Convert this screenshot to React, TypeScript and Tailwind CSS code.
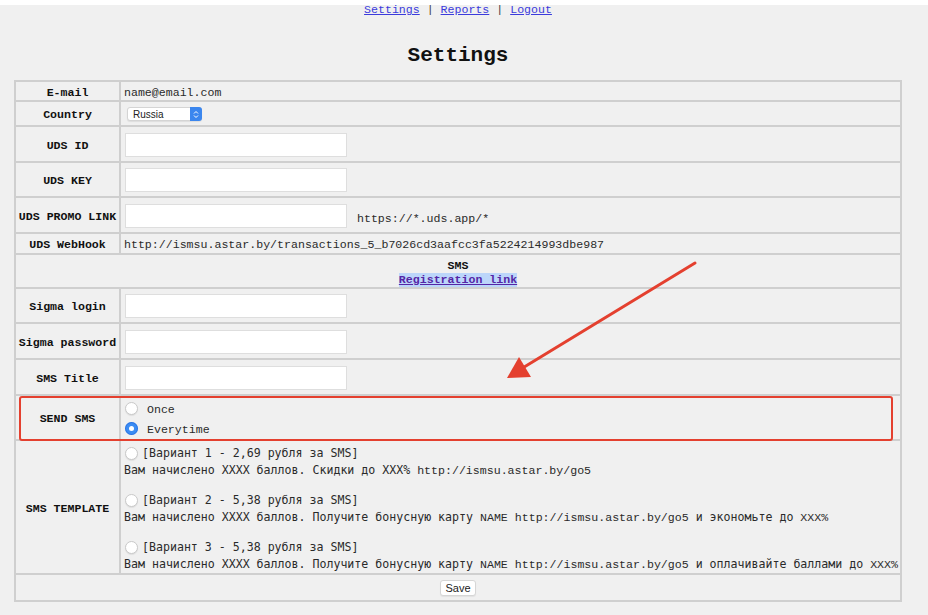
import React from "react";

const mono = "font-['Liberation_Mono','DejaVu_Sans_Mono',monospace]";
const sansMono = "font-['DejaVu_Sans_Mono','Liberation_Mono',monospace]";

const Radio = ({ checked }: { checked?: boolean }) =>
  checked ? (
    <span className="inline-flex w-[13px] h-[13px] rounded-full bg-[#3b8cf3] items-center justify-center shrink-0 shadow-[inset_0_0_0_1px_rgba(30,100,220,0.6)]">
      <span className="w-[5px] h-[5px] rounded-full bg-white" />
    </span>
  ) : (
    <span className="inline-block w-[13px] h-[13px] rounded-full bg-white border border-[#c9c9c9] shrink-0 shadow-[0_1px_1px_rgba(0,0,0,0.08)]" />
  );

const Input = () => (
  <div className="w-[222px] h-[24px] bg-white border border-[#dedede] shrink-0" />
);

const Label = ({ children, h }: { children: React.ReactNode; h: string }) => (
  <div className={`${h} bg-[#f0f0f0] flex items-center justify-center pt-[3px] font-bold text-[#111] whitespace-nowrap`}>
    {children}
  </div>
);

const S = ({ children }: { children: React.ReactNode }) => (
  <span className={sansMono}>{children}</span>
);

export default function App() {
  return (
    <div className={`relative w-[928px] h-[615px] bg-[#f0f0f0] overflow-hidden ${mono} text-[11.6px] text-[#2a2a2a]`}>
      <div className="h-[5px] bg-white" />
      <div className="w-[916px] h-[10px] leading-[10px] text-center whitespace-pre">
        <a className="text-[#3b3bdc] underline">Settings</a>
        <span className="text-[#444]"> | </span>
        <a className="text-[#3b3bdc] underline">Reports</a>
        <span className="text-[#444]"> | </span>
        <a className="text-[#3b3bdc] underline">Logout</a>
      </div>
      <div className="w-[916px] mt-[29px] mb-[12px] h-[24px] leading-[24px] text-center text-[21px] font-bold text-[#111]">
        Settings
      </div>

      <div className="w-[916px]">
        <div className="mx-auto w-[888px] grid grid-cols-[103px_779px] gap-[2px] p-[2px] bg-[#cfcfcf]">
          <Label h="h-[18px]">E-mail</Label>
          <div className="h-[18px] bg-[#f0f0f0] flex items-center pl-[3px] pt-[3px]">name@email.com</div>

          <Label h="h-[23px]">Country</Label>
          <div className="h-[23px] bg-[#f0f0f0] flex items-center pl-[6px] pt-[1px]">
            <div className="w-[75px] h-[14px] bg-white rounded-[3px] border border-[#d4d4d4] flex items-center justify-between font-['Liberation_Sans',sans-serif] text-[10px] text-[#222] shadow-[0_1px_1px_rgba(0,0,0,0.08)]">
              <span className="pl-[5px]">Russia</span>
              <span className="w-[12px] h-[14px] -mr-px rounded-r-[3px] bg-[#3b86ee] flex flex-col items-center justify-center">
                <svg width="6" height="9" viewBox="0 0 6 9">
                  <path d="M1 3.5 L3 1.5 L5 3.5 M1 5.5 L3 7.5 L5 5.5" stroke="white" strokeWidth="1" fill="none" />
                </svg>
              </span>
            </div>
          </div>

          <Label h="h-[34px]">UDS ID</Label>
          <div className="h-[34px] bg-[#f0f0f0] flex items-center pl-[4px] pt-[1px]"><Input /></div>

          <Label h="h-[33px]">UDS KEY</Label>
          <div className="h-[33px] bg-[#f0f0f0] flex items-center pl-[4px] pt-[1px]"><Input /></div>

          <Label h="h-[34px]">UDS PROMO LINK</Label>
          <div className="h-[34px] bg-[#f0f0f0] flex items-center pl-[4px] pt-[1px]">
            <Input />
            <span className="ml-[10px] mt-[6px]">https://*.uds.app/*</span>
          </div>

          <Label h="h-[19px]">UDS WebHook</Label>
          <div className="h-[19px] bg-[#f0f0f0] flex items-center pl-[3px] pt-[3px]">
            http://ismsu.astar.by/transactions_5_b7026cd3aafcc3fa5224214993dbe987
          </div>

          <div className="col-span-2 h-[32px] bg-[#f0f0f0] flex flex-col items-center justify-center pt-[3px] leading-[14px]">
            <span className="font-bold text-[#111]">SMS</span>
            <a className="font-bold text-[#5526a6] underline bg-[#bcd6fa]">Registration link</a>
          </div>

          <Label h="h-[33px]">Sigma login</Label>
          <div className="h-[33px] bg-[#f0f0f0] flex items-center pl-[4px] pt-[1px]"><Input /></div>

          <Label h="h-[34px]">Sigma password</Label>
          <div className="h-[34px] bg-[#f0f0f0] flex items-center pl-[4px] pt-[1px]"><Input /></div>

          <Label h="h-[34px]">SMS Title</Label>
          <div className="h-[34px] bg-[#f0f0f0] flex items-center pl-[4px] pt-[1px]"><Input /></div>

          <Label h="h-[43px]">SEND SMS</Label>
          <div className="h-[43px] bg-[#f0f0f0] flex flex-col justify-center pl-[4px] pt-[2px] leading-[18px]">
            <div className="flex items-center gap-[9px]"><Radio /><span className="pt-[2px]">Once</span></div>
            <div className="flex items-center gap-[9px]"><Radio checked /><span className="pt-[2px]">Everytime</span></div>
          </div>

          <Label h="h-[132px]">SMS TEMPLATE</Label>
          <div className="h-[132px] bg-[#f0f0f0] pl-[3px] pt-[4px] leading-[17px] whitespace-nowrap">
            <div className="mb-[13px]">
              <div className="flex items-center gap-[4px] pl-[1px]"><Radio /><S>[Вариант 1 - 2,69 рубля за SMS]</S></div>
              <div><S>Вам начислено XXXX баллов. Скидки до XXX%</S> http://ismsu.astar.by/go5</div>
            </div>
            <div className="mb-[13px]">
              <div className="flex items-center gap-[4px] pl-[1px]"><Radio /><S>[Вариант 2 - 5,38 рубля за SMS]</S></div>
              <div><S>Вам начислено XXXX баллов. Получите бонусную карту</S> NAME http://ismsu.astar.by/go5 <S>и экономьте до</S> XXX%</div>
            </div>
            <div>
              <div className="flex items-center gap-[4px] pl-[1px]"><Radio /><S>[Вариант 3 - 5,38 рубля за SMS]</S></div>
              <div><S>Вам начислено XXXX баллов. Получите бонусную карту</S> NAME http://ismsu.astar.by/go5 <S>и оплачивайте баллами до</S> XXX%</div>
            </div>
          </div>

          <div className="col-span-2 h-[25px] bg-[#f0f0f0] flex items-center justify-center pt-[1px]">
            <button className="w-[36px] h-[16px] bg-white border border-[#d6d6d6] rounded-[3px] font-['Liberation_Sans',sans-serif] text-[11px] leading-[14px] text-[#222] shadow-[0_1px_1px_rgba(0,0,0,0.06)]">
              Save
            </button>
          </div>
        </div>
      </div>

      <div className="absolute left-[19px] top-[396px] w-[874px] h-[45px] border-2 border-[#e4402f] rounded-[3px] pointer-events-none" />
      <svg className="absolute left-0 top-0 pointer-events-none" width="928" height="615">
        <line x1="695" y1="263" x2="516" y2="372" stroke="#e4402f" strokeWidth="3" strokeLinecap="round" />
        <polygon points="507,378 519,357 531,377" fill="#e4402f" />
      </svg>
    </div>
  );
}
